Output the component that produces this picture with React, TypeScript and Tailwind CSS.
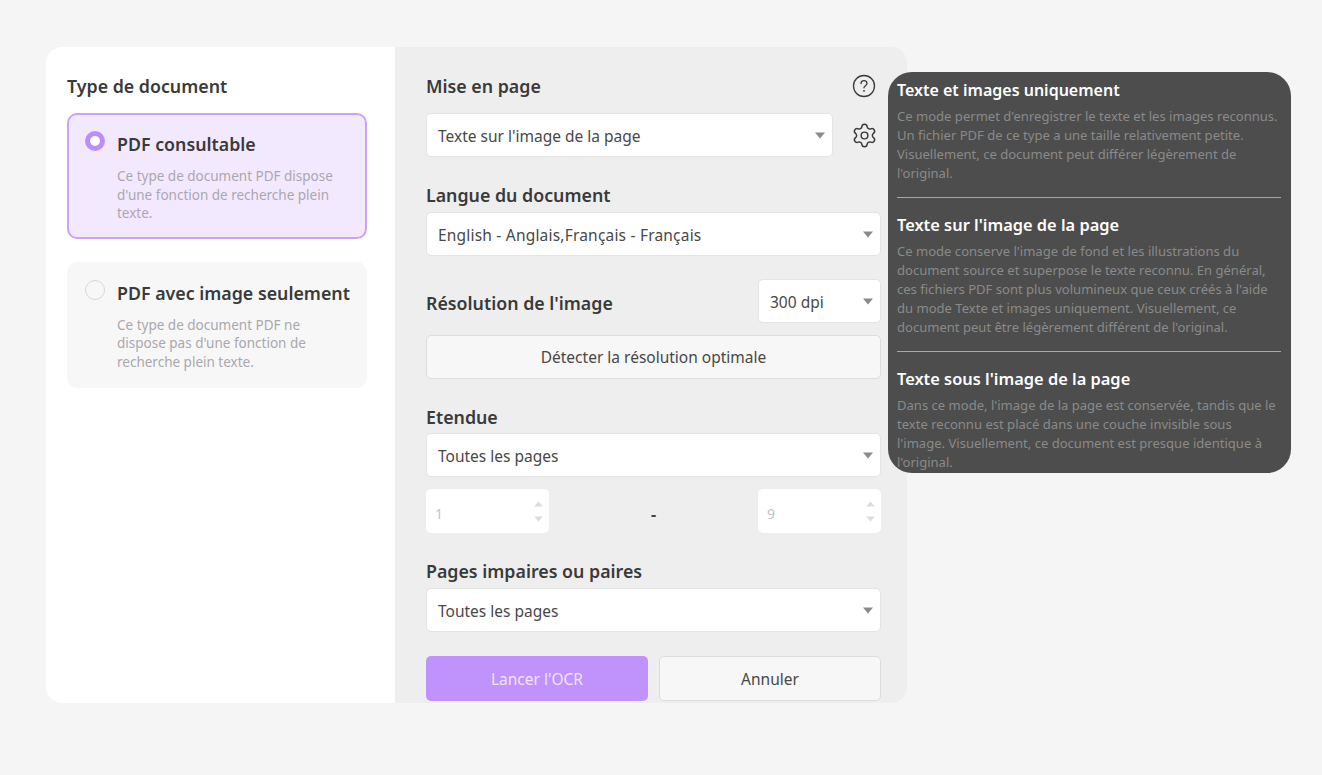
import { Settings } from "lucide-react";

const FONT = "font-['Noto_Sans','Open_Sans',sans-serif]";

function Caret({ muted = false }: { muted?: boolean }) {
  return (
    <svg
      width={muted ? 9 : 10}
      height={muted ? 6 : 7}
      viewBox="0 0 10 7"
      className={muted ? "text-[#dcdcdc]" : "text-[#8a8a8a]"}
    >
      <path d="M0 0.5h10L5 6.5z" fill="currentColor" />
    </svg>
  );
}

function Select({
  value,
  className = "",
  textClass = "",
}: {
  value: string;
  className?: string;
  textClass?: string;
}) {
  return (
    <div
      className={`flex h-[44px] items-center justify-between rounded-[5px] border border-[#e4e4e4] bg-white pl-[11px] pr-[7px] text-[15.5px] text-[#484848] ${className}`}
    >
      <span className={`pt-[4px] ${textClass}`}>{value}</span>
      <Caret />
    </div>
  );
}

function Label({ children, className = "" }: { children: string; className?: string }) {
  return (
    <div className={`pt-[1px] text-[17.8px] leading-[23px] font-semibold text-[#3a3a3a] ${className}`}>{children}</div>
  );
}

function NumberBox({ value }: { value: string }) {
  return (
    <div className="flex h-[44px] w-[123px] items-center justify-between rounded-[5px] bg-white pl-[9px] pr-[6px] text-[14px] text-[#c4c4c4]">
      <span className="pt-[4px]">{value}</span>
      <div className="flex flex-col gap-[9px]">
        <svg width="9" height="6" viewBox="0 0 10 7" className="text-[#dcdcdc]">
          <path d="M0 6.5h10L5 0.5z" fill="currentColor" />
        </svg>
        <Caret muted />
      </div>
    </div>
  );
}

function TypeCard({
  title,
  lines,
  active,
  className = "",
}: {
  title: string;
  lines: string[];
  active?: boolean;
  className?: string;
}) {
  return (
    <div
      className={`flex h-[126px] w-[300px] gap-[12px] rounded-[10px] ${
        active ? "border-2 border-[#c9a3fb] bg-[#f3e9fe] pl-[16px] pt-[16px]" : "bg-[#f7f7f7] pl-[18px] pt-[18px]"
      } ${className}`}
    >
      {active ? (
        <div className="h-[20px] w-[20px] shrink-0 rounded-full border-[5px] border-[#bd8efb] bg-white" />
      ) : (
        <div className="h-[20px] w-[20px] shrink-0 rounded-full border border-[#d8d8d8] bg-[#f7f7f7]" />
      )}
      <div className="pt-[1px]">
        <div className="whitespace-nowrap text-[17.8px] leading-[24px] font-semibold text-[#3a3a3a]">{title}</div>
        <div
          className={`text-[13.5px] leading-[18.5px] whitespace-nowrap text-[#aaa7ae] ${
            active ? "mt-[11px]" : "mt-[10.5px]"
          }`}
        >
          {lines.map((l) => (
            <div key={l}>{l}</div>
          ))}
        </div>
      </div>
    </div>
  );
}

function HelpBlock({
  title,
  lines,
  first,
  titleClass = "text-[16.4px]",
}: {
  title: string;
  lines: string[];
  first?: boolean;
  titleClass?: string;
}) {
  return (
    <div className={first ? "" : "mt-[14px] border-t border-[#a8a8a8] pt-[15px]"}>
      <div className={`leading-[24px] font-semibold text-white ${titleClass}`}>{title}</div>
      <div className="mt-[5px] text-[13.05px] leading-[19px] whitespace-nowrap text-[#8a8a8a]">
        {lines.map((l) => (
          <div key={l}>{l}</div>
        ))}
      </div>
    </div>
  );
}

export default function App() {
  return (
    <div className={`h-[775px] w-[1322px] overflow-hidden bg-[#f5f5f5] pl-[46px] pt-[47px] ${FONT}`}>
      <div className="relative flex h-[656px] w-[861px]">
        {/* left column */}
        <div className="w-[349px] rounded-l-[16px] bg-white pl-[21px] pt-[27px]">
          <Label>Type de document</Label>
          <TypeCard
            active
            className="mt-[15px]"
            title="PDF consultable"
            lines={["Ce type de document PDF dispose", "d'une fonction de recherche plein", "texte."]}
          />
          <TypeCard
            className="mt-[23px]"
            title="PDF avec image seulement"
            lines={["Ce type de document PDF ne", "dispose pas d'une fonction de", "recherche plein texte."]}
          />
        </div>

        {/* right column */}
        <div className="w-[512px] rounded-r-[16px] bg-[#eeeeee] pl-[31px] pt-[27px]">
          <div className="w-[455px]">
            <div className="flex items-center justify-between">
              <Label>Mise en page</Label>
              <svg width="24" height="24" viewBox="0 0 24 24" fill="none" className="mr-[5px] text-[#3a3a3a]">
                <circle cx="12" cy="12" r="10.5" stroke="currentColor" strokeWidth="1.3" />
                <path
                  d="M9 9.6a3 3 0 0 1 6 0c0 2.1-3 2.2-3 4.2"
                  stroke="currentColor"
                  strokeWidth="1.3"
                  strokeLinecap="round"
                />
                <circle cx="12" cy="16.9" r="0.9" fill="currentColor" />
              </svg>
            </div>
            <div className="mt-[15px] flex items-center justify-between">
              <Select value="Texte sur l'image de la page" className="w-[407px]" />
              <Settings size={27} strokeWidth={1.3} className="mr-[3px] text-[#3a3a3a]" />
            </div>

            <Label className="mt-[26px]">Langue du document</Label>
            <Select
              value="English - Anglais,Français - Français"
              className="mt-[5px]"
              textClass="tracking-[0.2px]"
            />

            <div className="mt-[23px] flex items-center justify-between">
              <Label className="mt-[3px]">Résolution de l'image</Label>
              <Select value="300 dpi" className="w-[123px]" />
            </div>
            <div className="mt-[12px] flex h-[44px] items-center justify-center rounded-[5px] border border-[#dddddd] bg-[#f7f7f7] pt-[2px] text-[15.5px] text-[#484848]">
              Détecter la résolution optimale
            </div>

            <Label className="mt-[26px]">Etendue</Label>
            <Select value="Toutes les pages" className="mt-[4px]" />
            <div className="mt-[12px] flex items-center justify-between">
              <NumberBox value="1" />
              <span className="pt-[5px] text-[16px] font-bold text-[#444444]">-</span>
              <NumberBox value="9" />
            </div>

            <Label className="mt-[26px]">Pages impaires ou paires</Label>
            <Select value="Toutes les pages" className="mt-[5px]" />

            <div className="mt-[24px] flex justify-between">
              <div className="flex h-[45px] w-[222px] items-center justify-center rounded-[5px] bg-[#c092fc] pt-[2px] text-[15.5px] text-[#f0e4fe]">
                Lancer l'OCR
              </div>
              <div className="flex h-[45px] w-[222px] items-center justify-center rounded-[5px] border border-[#dddddd] bg-[#f7f7f7] pt-[2px] text-[15.5px] text-[#484848]">
                Annuler
              </div>
            </div>
          </div>
        </div>

        {/* help tooltip over the panel */}
        <div className="absolute left-[842px] top-[25px] h-[401px] w-[403px] overflow-hidden rounded-[24px] bg-[#4d4d4d] pl-[9px] pr-[10px] pt-[6px]">
          <HelpBlock
            first
            titleClass="text-[16px]"
            title="Texte et images uniquement"
            lines={[
              "Ce mode permet d'enregistrer le texte et les images reconnus.",
              "Un fichier PDF de ce type a une taille relativement petite.",
              "Visuellement, ce document peut différer légèrement de",
              "l'original.",
            ]}
          />
          <HelpBlock
            title="Texte sur l'image de la page"
            lines={[
              "Ce mode conserve l'image de fond et les illustrations du",
              "document source et superpose le texte reconnu. En général,",
              "ces fichiers PDF sont plus volumineux que ceux créés à l'aide",
              "du mode Texte et images uniquement. Visuellement, ce",
              "document peut être légèrement différent de l'original.",
            ]}
          />
          <HelpBlock
            title="Texte sous l'image de la page"
            lines={[
              "Dans ce mode, l'image de la page est conservée, tandis que le",
              "texte reconnu est placé dans une couche invisible sous",
              "l'image. Visuellement, ce document est presque identique à",
              "l'original.",
            ]}
          />
        </div>
      </div>
    </div>
  );
}
